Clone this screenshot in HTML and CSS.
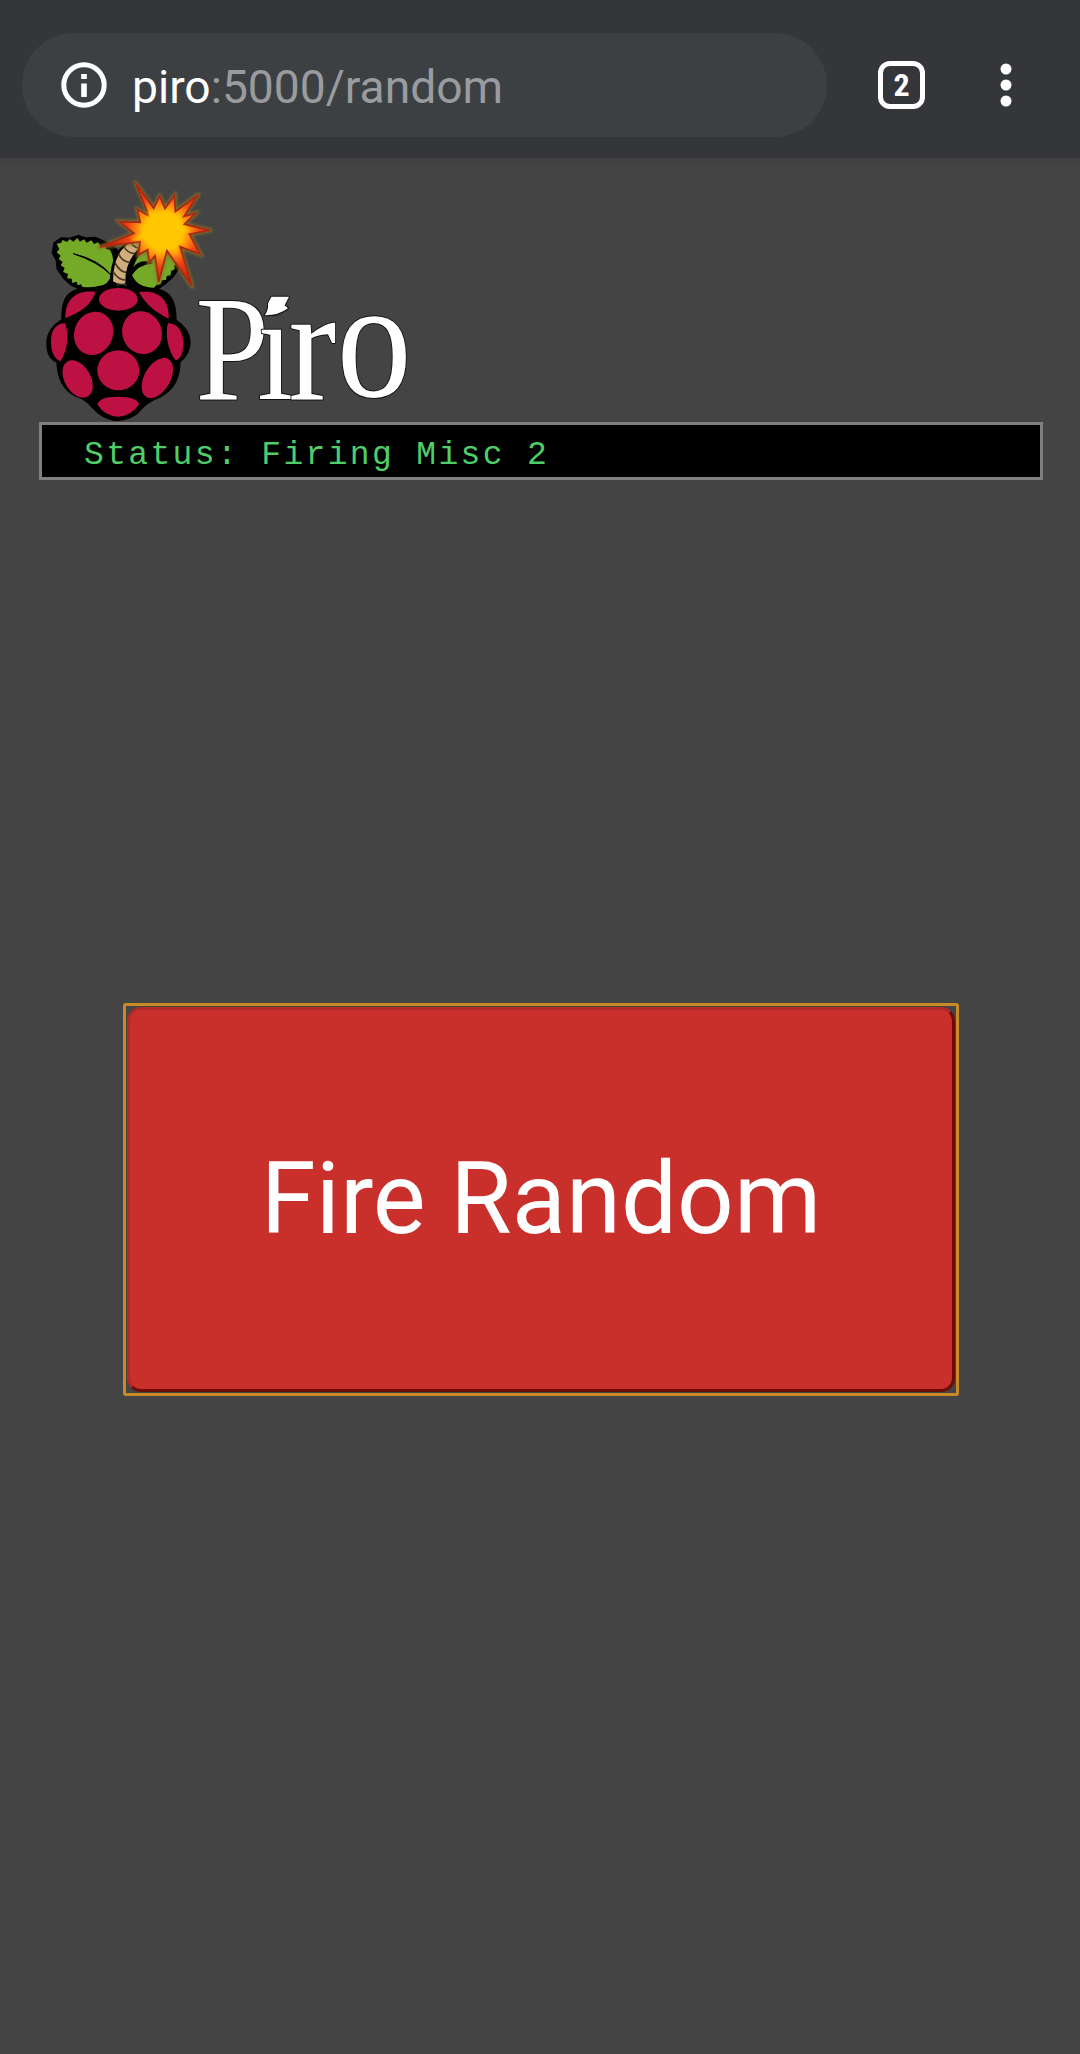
FILE: index.html
```html
<!DOCTYPE html>
<html lang="en">
<head>
<meta charset="utf-8">
<title>Piro</title>
<link rel="stylesheet" href="styles.css">
</head>
<body>
<header class="toolbar">
  <div class="omnibox">
    <svg class="info" viewBox="0 0 46 46"><circle cx="23" cy="23" r="20.2" fill="none" stroke="#fff" stroke-width="5"/><path d="M20.2 12h5.6v5h-5.6zM20.2 21.5h5.6V35h-5.6z" fill="#fff"/></svg>
    <span class="url"><span class="host">piro</span>:5000/random</span>
  </div>
  <div class="tabs">2</div>
  <svg class="menu" viewBox="0 0 12 46"><g fill="#fff"><circle cx="6" cy="7" r="5.5"/><circle cx="6" cy="23" r="5.5"/><circle cx="6" cy="39" r="5.5"/></g></svg>
</header>
<main class="page">
  <svg class="logo" viewBox="0 0 1200 756">
    <defs>
      <radialGradient id="blast" gradientUnits="userSpaceOnUse" cx="400" cy="183" r="165">
        <stop offset="0" stop-color="#ffd000"/><stop offset=".34" stop-color="#ffc400"/><stop offset=".48" stop-color="#ff8a10"/><stop offset=".66" stop-color="#e84316"/><stop offset="1" stop-color="#b92610"/>
      </radialGradient>
      <filter id="glow" x="-10%" y="-10%" width="120%" height="120%"><feGaussianBlur stdDeviation="5"/></filter>
    </defs>
    <!-- leaves -->
    <g stroke="#000" stroke-linejoin="round">
      <path d="M75 220L95 207L120 208L145 200L168 207L195 205L215 214L240 225L258 240L275 290L255 345L225 356H155L125 343L105 325L84 295L82 270L70 248Z" stroke-width="10"/>
      <path d="M438 245L445 275L440 300L425 320L405 338L380 356H335L295 345V285L330 240Z" stroke-width="10"/>
    </g>
    <path d="M80 221L94 218L97 210L111 216L119 207L130 215L142 204L150 215L162 208L170 218L184 211L192 222L204 217L212 228L224 226L229 237L240 239Q252 260 250 292Q244 335 220 345Q190 354 158 352L153 343L143 346L140 335L127 339L125 326L111 325L114 312L99 306L104 294L92 286L98 276L86 267L92 257L80 247L88 237Z" fill="#75a928"/>
    <path d="M306 315Q325 285 360 275Q325 270 310 292Q322 252 350 240L435 245L441 275L433 287L434 298L423 303L422 316L410 318L408 330L396 331L391 343L380 344L372 353Q322 353 306 315Z" fill="#75a928"/>
    <path d="M130 251Q205 276 243 315Q209 270 130 251ZM306 313Q320 286 367 278Q330 278 306 300Z" stroke="#000" stroke-width="3"/>
    <!-- fuse -->
    <path d="M239 343Q240 230 315 205L350 220Q288 270 300 343Z"/>
    <path d="M249 334Q250 236 315 211L340 222Q283 270 286 340Q265 345 249 334Z" fill="#d1ad7d"/>
    <path d="M249 305Q269 333 287 329M255 279Q270 306 289 307M266 252Q276 275 299 277M283 231Q291 249 315 251M303 217Q310 232 327 234" fill="none" stroke="#4b3724" stroke-width="5"/>
    <!-- berry -->
    <path d="M158 352C110 362 94 385 94 448C67 465 48 490 49 520C49 550 58 568 79 578C82 625 96 660 138 681C171 690 181 712 204 731Q262 774 322 733C344 705 363 694 390 683C429 664 451 630 452 577Q483 550 482 515Q480 475 440 450C440 390 421 358 370 354Q310 355 280 345Q248 345 225 356Z"/>
    <g fill="#bc1142">
      <path d="M197 366C137 358 105 390 106 444C151 426 181 409 197 366Z"/>
      <path d="M327 367C388 358 418 391 416 446C371 425 347 401 327 367Z"/>
      <ellipse cx="265" cy="388" rx="58" ry="34"/>
      <ellipse cx="191" cy="490" rx="58" ry="66" transform="rotate(22 191 490)"/>
      <ellipse cx="336" cy="488" rx="59" ry="65" transform="rotate(-22 336 488)"/>
      <ellipse cx="265" cy="601" rx="63" ry="60"/>
      <path d="M104 459C73 463 62 485 63 519Q65 564 92 574C113 540 119 487 104 459Z"/>
      <path d="M414 459C447 462 459 488 460 519Q459 566 437 571C414 545 404 490 414 459Z"/>
      <ellipse cx="143" cy="627" rx="39" ry="61" transform="rotate(-30 143 627)"/>
      <ellipse cx="382" cy="624" rx="39" ry="66" transform="rotate(30 382 624)"/>
      <path d="M202 703Q210 679 264 680Q321 680 327 703Q306 738 264 740Q224 739 202 703Z"/>
    </g>
    <!-- explosion -->
    <path d="M314 34L371 112L389 76L405 113L435 73L437 121L508 70L464 137L500 127L466 162L546 181L480 193L514 256L452 233L489 354L411 245L386 342L375 260L357 282L352 242L324 259L328 218L203 233L310 190L264 153L329 155L320 115L358 137Z" fill="none" stroke="#8a7420" stroke-width="8" filter="url(#glow)"/>
    <path d="M316 38L371 115L389 79L405 116L433 77L436 125L504 75L462 139L496 130L463 163L540 181L478 192L510 252L450 230L486 348L411 242L386 336L375 257L358 277L353 239L326 254L330 215L210 231L312 190L268 155L331 157L322 118L358 139Z" fill="url(#blast)" stroke="#ab2711" stroke-width="5"/>
    <path d="M355 118L382 146L399 132L424 143L448 130L449 163L480 181L447 192L462 217L434 212L443 260L408 208L387 260L381 223L357 227L356 204L300 212L344 185L325 170L355 171Z" fill="#ffc700" filter="url(#glow)"/>
    <!-- wordmark -->
    <g class="wordmark">
      <text transform="scale(.88 1)" x="564 775 881 1046" y="690 686 690 677">Pi<tspan class="arm">r</tspan><tspan class="bowl">o</tspan></text>
      <path d="M724 380H777L764 406L774 415Q745 437 704 436Q716 420 714 400Z"/>
    </g>
  </svg>
  <div class="status">Status: Firing Misc 2</div>
  <div class="focus"><button class="fire">Fire Random</button></div>
</main>
</body>
</html>
```
FILE: styles.css
```css
* { box-sizing: border-box; }
body { margin: 0; background: #444; font-family: Roboto, sans-serif; }
.toolbar { height: 158px; padding: 33px 68px 21px 22px; display: flex; align-items: center; background: #35363a; }
.omnibox { width: 805px; height: 104px; padding-left: 39px; display: flex; align-items: center; border-radius: 52px; background: #3c4043; }
.info { width: 46px; height: 46px; }
.url { margin-left: 25px; padding-top: 4px; font-size: 46.2px; line-height: 56px; color: #9a9b9e; white-space: nowrap; }
.host { color: #fff; }
.tabs { width: 47px; height: 48px; margin-left: 51px; border: 5px solid #fff; border-radius: 12px; color: #fff; font: 700 32px/39px "Roboto Condensed", Roboto, sans-serif; text-align: center; }
.menu { width: 12px; height: 46px; margin-left: auto; }
.page { min-height: 1896px; padding: 12px 37px 0 30px; display: flex; flex-direction: column; background: linear-gradient(#404040, #444 8px); }
.logo { display: block; width: 400px; height: 252px; }
.wordmark { fill: #fff; stroke: #111; stroke-width: 6px; paint-order: stroke; stroke-linejoin: round; font: 450px "Liberation Serif", serif; }
.arm { font-size: 490px; }
.bowl { font-size: 510px; }
.status { height: 58px; margin-left: 9px; padding: 4px 0 0 42px; border: 3px solid #808080; background: #000; color: #4fce68; font: 33px/54px "Liberation Mono", monospace; letter-spacing: 2.35px; white-space: pre; }
.focus { width: 836px; height: 393px; margin: 523px 0 0 93px; padding: 1px; display: flex; border: 3px solid #c98a26; border-radius: 3px; }
.fire { flex: 1; padding: 0 0 2px; border: 3px solid; border-color: #b02a27 #6c0b08 #6c0b08 #b02a27; border-radius: 14px; background: #c9302c; color: #fff; font: 99.6px/116px Roboto, sans-serif; }
```
